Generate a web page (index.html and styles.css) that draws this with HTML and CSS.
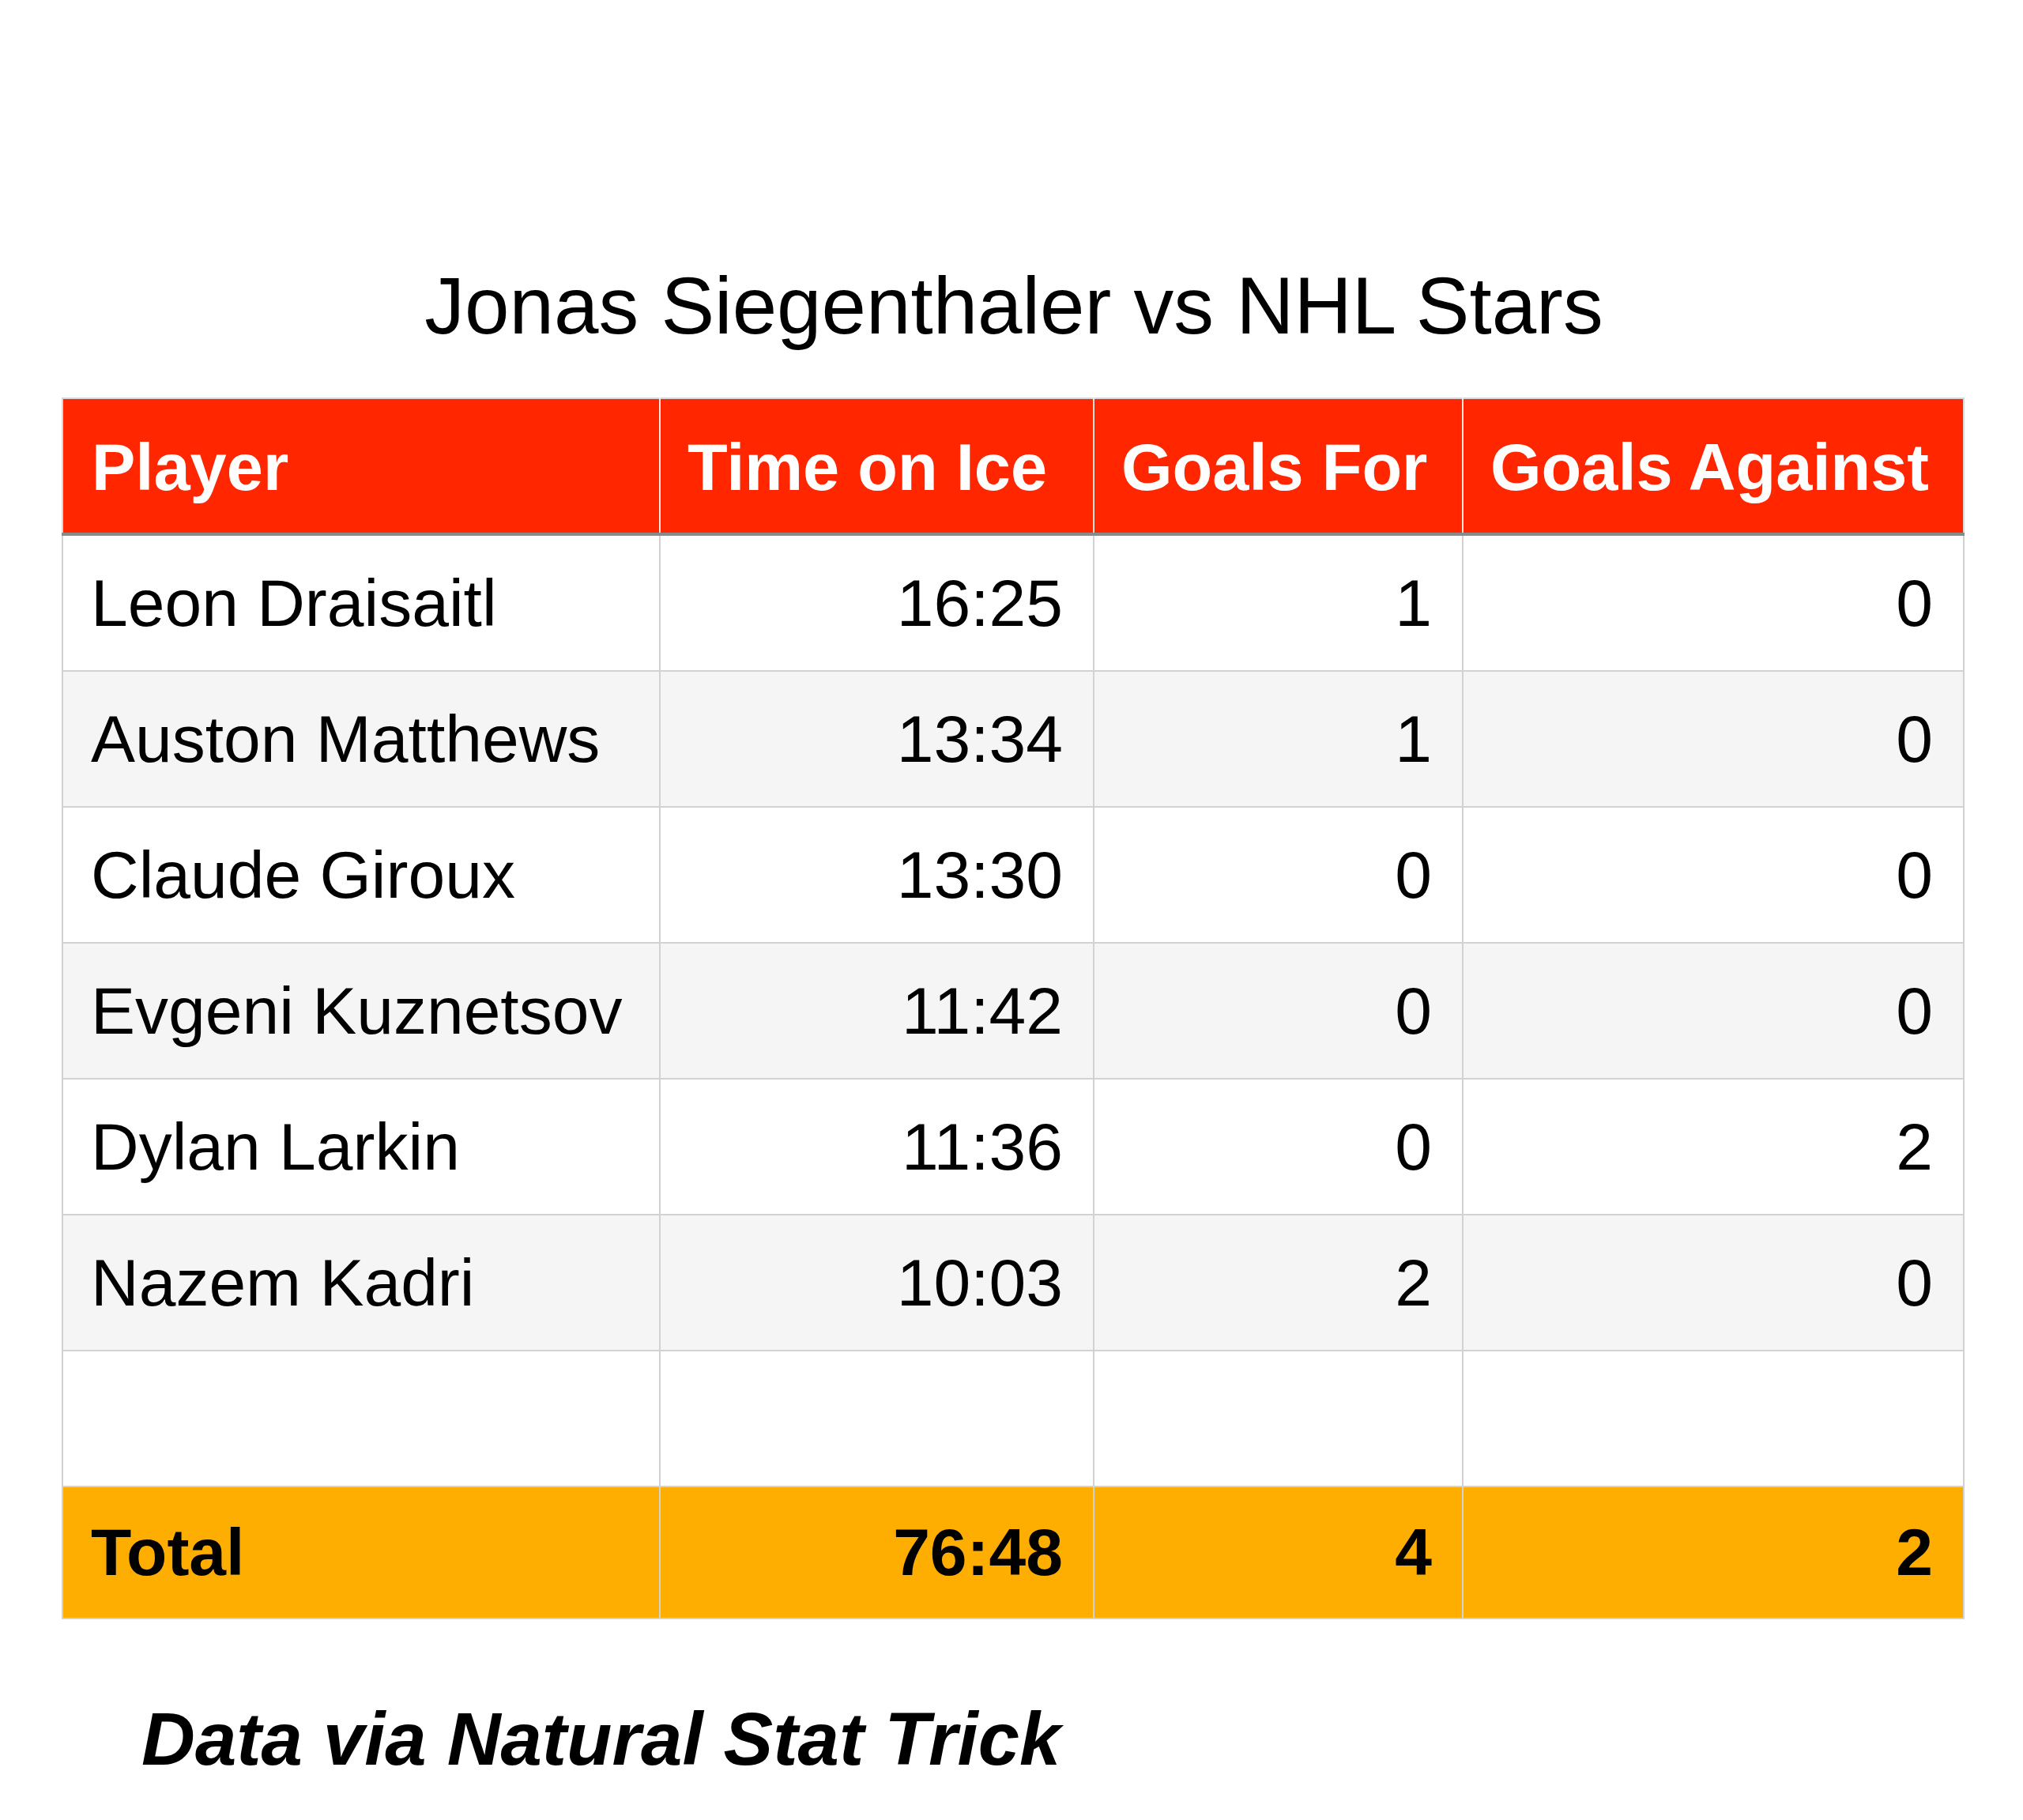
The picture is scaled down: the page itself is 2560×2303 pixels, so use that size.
FILE: index.html
```html
<!DOCTYPE html>
<html lang="en">
<head>
<meta charset="utf-8">
<title>Jonas Siegenthaler vs NHL Stars</title>
<link rel="stylesheet" href="styles.css">
</head>
<body>
<main class="page">
  <h1 class="title">Jonas Siegenthaler vs NHL Stars</h1>
  <table class="stats">
    <colgroup>
      <col class="c-player">
      <col class="c-toi">
      <col class="c-gf">
      <col class="c-ga">
    </colgroup>
    <thead>
      <tr>
        <th>Player</th>
        <th>Time on Ice</th>
        <th>Goals For</th>
        <th>Goals Against</th>
      </tr>
    </thead>
    <tbody>
      <tr><td>Leon Draisaitl</td><td class="num">16:25</td><td class="num">1</td><td class="num">0</td></tr>
      <tr><td>Auston Matthews</td><td class="num">13:34</td><td class="num">1</td><td class="num">0</td></tr>
      <tr><td>Claude Giroux</td><td class="num">13:30</td><td class="num">0</td><td class="num">0</td></tr>
      <tr><td>Evgeni Kuznetsov</td><td class="num">11:42</td><td class="num">0</td><td class="num">0</td></tr>
      <tr><td>Dylan Larkin</td><td class="num">11:36</td><td class="num">0</td><td class="num">2</td></tr>
      <tr><td>Nazem Kadri</td><td class="num">10:03</td><td class="num">2</td><td class="num">0</td></tr>
      <tr class="empty"><td></td><td></td><td></td><td></td></tr>
    </tbody>
    <tfoot>
      <tr><td>Total</td><td class="num">76:48</td><td class="num">4</td><td class="num">2</td></tr>
    </tfoot>
  </table>
  <p class="source">Data via Natural Stat Trick</p>
</main>
</body>
</html>
```

FILE: styles.css
```css
html, body {
  margin: 0;
  padding: 0;
  background: #ffffff;
}

body {
  font-family: "Liberation Sans", Arial, Helvetica, sans-serif;
  color: #000000;
}

.page {
  padding: 327px 0 0 78px;
  width: 2406px;
}

.title {
  margin: 0 0 56px 0;
  font-size: 101.5px;
  line-height: 120px;
  font-weight: 400;
  text-align: center;
  padding-left: 4px;
}

.stats {
  border-collapse: collapse;
  table-layout: fixed;
  width: 2406px;
}

.c-player { width: 756px; }
.c-toi { width: 549px; }
.c-gf { width: 467px; }
.c-ga { width: 634px; }

.stats th,
.stats td {
  padding: 0 38px 0 35px;
  white-space: nowrap;
  vertical-align: middle;
  border: 2px solid #d2d2d2;
}

.stats thead th {
  height: 165px;
  background: #ff2600;
  color: #ffffff;
  font-size: 83px;
  font-weight: 700;
  text-align: left;
  padding: 4px 0 0 34px;
  border-top: 2px solid #d6d6d6;
  border-left: 2px solid #fbe3de;
  border-right: 2px solid #fbe3de;
  border-bottom: 4px solid #8a8a8a;
}

.stats thead th:first-child {
  border-left: 2px solid #d6d6d6;
  padding-left: 36px;
}

.stats thead th:last-child {
  border-right: 2px solid #d6d6d6;
}

.stats tbody td {
  height: 170px;
  font-size: 84px;
  background: #ffffff;
}

.stats tbody tr:nth-child(even) td {
  background: #f5f5f5;
}

.stats .num {
  text-align: right;
}

.stats tfoot td {
  height: 165px;
  background: #feae00;
  font-size: 84px;
  font-weight: 700;
}

.source {
  margin: 97px 0 0 101px;
  font-size: 94px;
  line-height: 110px;
  font-weight: 700;
  font-style: italic;
}
```
